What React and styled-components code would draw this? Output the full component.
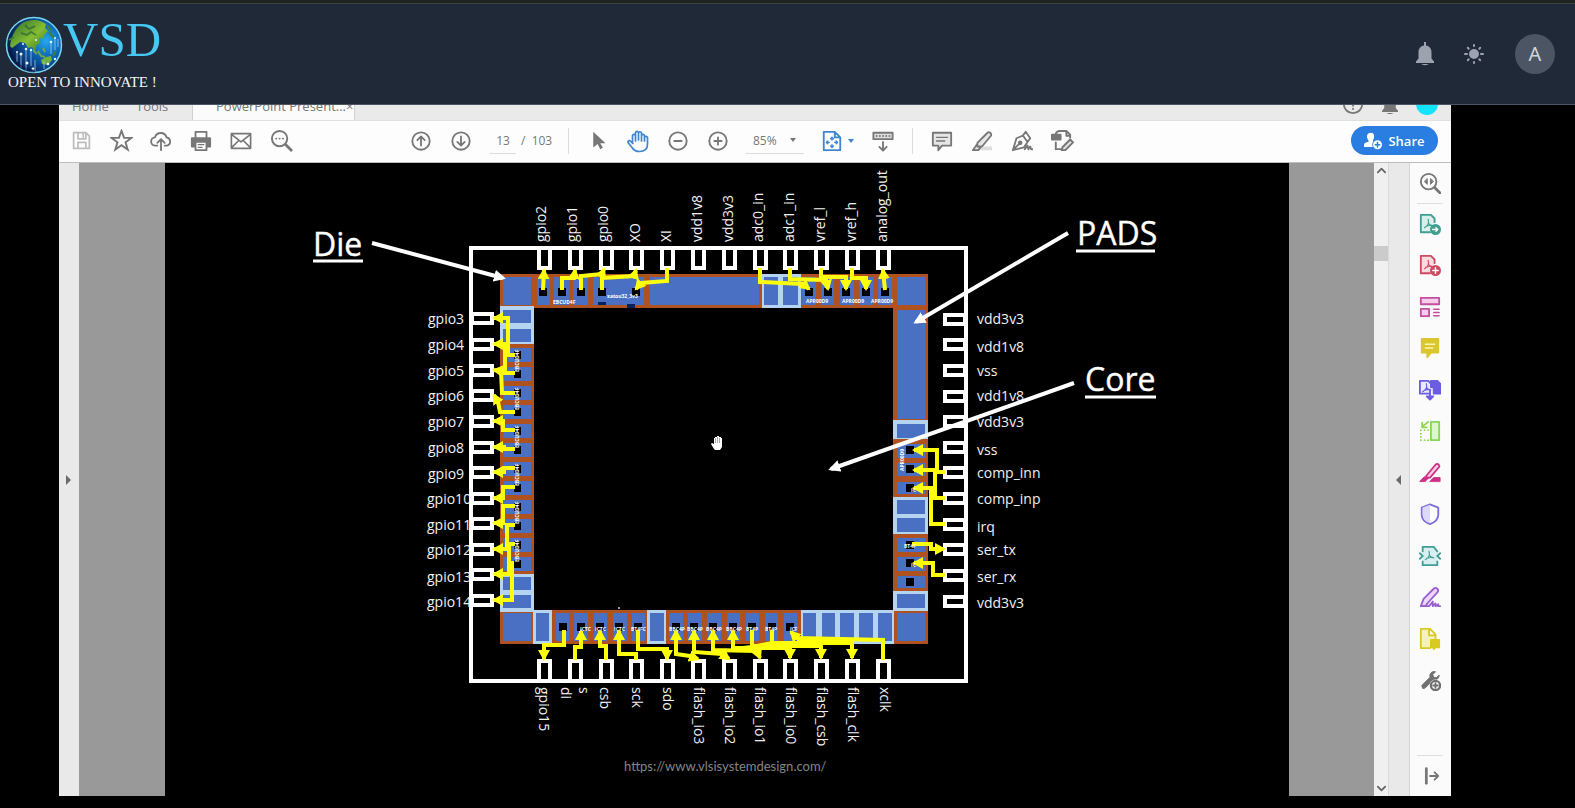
import React from "react";
import styled, { createGlobalStyle } from "styled-components";

const GlobalStyle = createGlobalStyle`
  * { box-sizing: border-box; }
  body { margin: 0; background: #000; font-family: "Open Sans", "Noto Sans", sans-serif; }
  button, input, select { font: inherit; color: inherit; margin: 0; padding: 0; border: 0; background: none; }
  button { cursor: pointer; }
`;

/* ---------- site header ---------- */

const TopStrip = styled.div`
  height: 4px;
  background: #1f241f;
  border-bottom: 1px solid #3d4043;
`;

const Header = styled.header`
  display: flex;
  align-items: center;
  justify-content: space-between;
  height: 101px;
  padding: 0 20px 0 5px;
  background: #202938;
  border-bottom: 1px solid #4b5563;
`;

const Brand = styled.a`
  display: flex;
  flex-direction: column;
  color: #fff;
  text-decoration: none;
  font-family: "Liberation Serif", serif;
`;

const BrandRow = styled.span`
  display: flex;
  align-items: flex-start;
  height: 56px;
`;

const BrandName = styled.span`
  font-size: 49px;
  line-height: 48px;
  color: #45c8f3;
`;

const BrandTag = styled.span`
  padding-left: 3px;
  font-size: 15px;
  line-height: 20px;
  color: #f4f5f7;
`;

const HeaderActions = styled.div`
  display: flex;
  align-items: center;
  gap: 25px;
  color: #9ca3af;
`;

const HeaderButton = styled.button`
  display: grid;
  place-items: center;
  width: 24px;
  height: 40px;
`;

const Avatar = styled.button`
  width: 40px;
  height: 40px;
  margin-left: 4px;
  border-radius: 50%;
  background: #4b5563;
  color: #d1d5db;
  font-family: "Noto Sans", sans-serif;
  font-size: 20px;
  line-height: 40px;
`;

/* ---------- document viewer ---------- */

const Viewer = styled.main`
  margin: 0 124px 12px 59px;
  background: #fdfdfd;
  color: #777;
`;

const TabStrip = styled.div`
  display: flex;
  align-items: flex-end;
  height: 16px;
  overflow: hidden;
  background: #eaeaea;
  font-size: 13px;
  line-height: 20px;
  border-bottom: 1px solid #e0e0e0;
`;

const Tab = styled.button`
  display: flex;
  justify-content: space-between;
  flex: none;
  height: 24px;
  width: ${(p) => p.$width}px;
  padding: 0 8px 4px ${(p) => p.$indent}px;
  color: #777;
  background: ${(p) => (p.$active ? "#fbfbfb" : "transparent")};
  border-right: 1px solid ${(p) => (p.$edge ? "#d0d0d0" : "transparent")};
  line-height: 20px;
  white-space: nowrap;
`;

const TabActions = styled.div`
  display: flex;
  align-items: center;
  gap: 18px;
  height: 32px;
  margin-left: auto;
  padding-right: 13px;
`;

const Profile = styled.span`
  width: 22px;
  height: 22px;
  border-radius: 50%;
  background: #12e4ff;
`;

const Toolbar = styled.div`
  display: flex;
  align-items: center;
  height: 42px;
  padding: 0 13px 2px 2px;
  border-bottom: 1px solid #bdbdbd;
  font-size: 12px;
`;

const ToolGroup = styled.div`
  display: flex;
  align-items: center;
  margin-left: ${(p) => p.$start || 0}px;
`;

const ToolButton = styled.button`
  display: flex;
  align-items: center;
  justify-content: center;
  gap: 5px;
  width: ${(p) => (p.$wide ? 48 : 40)}px;
  height: 40px;
  color: ${(p) => p.$color || "#777"};
`;

const Divider = styled.span`
  width: 1px;
  height: 26px;
  margin: 0 9px;
  background: #dcdcdc;
`;

const PageInput = styled.input`
  width: 26px;
  height: 26px;
  margin-left: 9px;
  border-bottom: 1px solid #dcdcdc;
  text-align: center;
`;

const PageTotal = styled.span`
  width: 43px;
  padding-left: 5px;
  white-space: pre;
`;

const ZoomField = styled.label`
  display: flex;
  align-items: center;
  width: 58px;
  height: 26px;
  margin: 0 9px 0 8px;
  padding: 0 8px 0 7px;
  border-bottom: 1px solid #dcdcdc;
`;

const ZoomSelect = styled.select`
  flex: 1;
  min-width: 0;
  appearance: none;
  outline: none;
`;

const Caret = styled.span`
  flex: none;
  border: 3px solid transparent;
  border-top: 4px solid currentColor;
  border-bottom: 0;
`;

const ShareButton = styled.button`
  display: flex;
  align-items: center;
  justify-content: center;
  gap: 6px;
  width: 87px;
  height: 29px;
  margin-left: auto;
  border-radius: 15px;
  background: #2a7de1;
  color: #fff;
  font-size: 13px;
  font-weight: 600;
`;

const Workspace = styled.div`
  display: flex;
`;

const PanelToggle = styled.button`
  display: grid;
  place-items: center;
  flex: none;
  width: 20px;
  padding-right: 2px;
  background: #e9e9e9;
  color: #6a6a6a;
`;

const Arrow = styled.span`
  border: 5px solid transparent;
  ${(p) => (p.$to === "left" ? "border-right-color" : "border-left-color")}: currentColor;
  border-${(p) => p.$to}-width: 0;
`;

const Stage = styled.section`
  flex: 1;
  min-width: 0;
  padding: 0 85px 0 86px;
  background: #999;
`;

const Slide = styled.svg`
  display: block;
  width: 100%;
  height: auto;
  background: #000;
  font-family: "Open Sans", "Noto Sans", sans-serif;
`;

const ScrollTrack = styled.div`
  display: flex;
  flex-direction: column;
  justify-content: space-between;
  flex: none;
  width: 15px;
  background: #f0f0f0;
  border-right: 1px solid #d9d9d9;
  color: #666;
`;

const ScrollButton = styled.button`
  display: grid;
  place-items: center;
  width: 14px;
  height: 15px;
`;

const ScrollThumb = styled.span`
  width: 14px;
  height: 15px;
  margin: 68px 0 auto;
  background: #cbcbcb;
`;

const SideTools = styled.aside`
  display: flex;
  flex-direction: column;
  align-items: center;
  flex: none;
  width: 42px;
  padding-right: 2px;
  border-left: 1px solid #d4d4d4;
  background: #fbfbfb;
`;

const SideList = styled.div`
  display: flex;
  flex-direction: column;
  justify-content: space-between;
  flex: 1;
  margin-bottom: 55px;
`;

const SideRule = styled.span`
  width: 26px;
  height: 1px;
  background: #dedede;
`;

/* ---------- icons ---------- */

const Icon = ({ size = 22, children, w = 2 }) => (
  <svg width={size} height={size} viewBox="0 0 24 24" fill="none" stroke="currentColor" strokeWidth={w} strokeLinejoin="round" strokeLinecap="round" aria-hidden="true">
    {children}
  </svg>
);

const Acro = ({ x = 0, y = 0 }) => (
  <path transform={`translate(${x} ${y})`} d="M10 7c1 4 .5 6-4 9M10 11c1 2 2 2.600 5 3M7.500 14.500c2-1 4-1 7-.8" strokeWidth="1.300" />
);

const Globe = () => (
  <svg width="58" height="58" viewBox="0 0 58 58" aria-hidden="true">
    <defs>
      <radialGradient id="sea" cx=".72" cy=".42" r=".7">
        <stop offset="0" stopColor="#25a9ee" />
        <stop offset=".45" stopColor="#0d62b5" />
        <stop offset="1" stopColor="#071c4b" />
      </radialGradient>
      <linearGradient id="land" x1="0" y1="0" x2="1" y2="1">
        <stop offset="0" stopColor="#26682c" />
        <stop offset=".55" stopColor="#86bd32" />
        <stop offset="1" stopColor="#28712f" />
      </linearGradient>
    </defs>
    <circle cx="29" cy="29" r="27.500" fill="url(#sea)" stroke="#78d5ef" strokeWidth="1.500" />
    <path d="M16 8c4-3 8-4 13-4 5 0 9 2 12 4l-1 4 3 3-3 3-2 5-4-1 1 5-4 3-1 6-3-5-4 1-3-5-5-1-4 3-4 3-2-2c1-9 5-17 11-22z" fill="url(#land)" />
    <path d="M20 9l4 4 6-3M16 17l6 2 4-3 5 3" stroke="#1d5b38" strokeWidth="2" opacity=".6" fill="none" />
    <path d="M28 34l4 4M33 35l3 5 4 1M38 32l2 4" stroke="#71a940" strokeWidth="2" fill="none" />
    <path d="M36 44l5-3 5-1 1 4-4 5-6-1z" fill="#70b23e" />
    <path d="M42 9l4 6M44 16l5 6M4 24l5-3M48 40l3-5" stroke="#3c832f" strokeWidth="2" />
    <path d="M16 52V38M21 55V33M26 50V34M30 55V44M12 46V36M46 38V26M50 34V22M53 31v-8M39 53v-8" stroke="#9fc8f2" strokeWidth="1" opacity=".8" />
    <g fill="#e4f4ff">
      <circle cx="16" cy="38" r="1.500" /><circle cx="21" cy="33" r="1.300" /><circle cx="26" cy="34" r="1.200" /><circle cx="46" cy="26" r="1.300" />
      <circle cx="22" cy="47" r="1.500" /><circle cx="28" cy="53" r="1.400" /><circle cx="50" cy="43" r="1.200" /><circle cx="43" cy="48" r="1.300" />
      <circle cx="31" cy="24" r="1" /><circle cx="18" cy="28" r="1" /><circle cx="50" cy="22" r="1" /><circle cx="12" cy="36" r="1" />
    </g>
    <path d="M5 35c3 12 13 20 25 20" stroke="#061440" strokeWidth="3" opacity=".5" fill="none" />
  </svg>
);

const BellShape = ({ w = 18, h = 24 }) => (
  <svg width={w} height={h} viewBox="0 0 18 24" fill="currentColor" aria-hidden="true">
    <path d="M8 0h2v3.600c3.500.6 5.500 3 5.500 7v5.900l2.500 3V21H0v-1.500l2.500-3v-5.900c0-4 2-6.400 5.500-7zM5.500 22h7c-.6 1.500-6.400 1.500-7 0z" />
  </svg>
);

const Sun = () => (
  <svg width="20" height="20" viewBox="0 0 20 20" stroke="currentColor" strokeWidth="2" strokeLinecap="round" aria-hidden="true">
    <circle cx="10" cy="10" r="4" fill="currentColor" />
    <path d="M10 1v1M10 18v1M1 10h2M17 10h2M3.800 3.800l.9.9M15.300 15.300l.9.9M3.800 16.200l.9-.9M15.300 4.700l.9-.9" />
  </svg>
);

const SaveIcon = () => <Icon size={21}><path d="M3 3h14l4 4v14H3zM8 3v7h9V3M8 21v-7h9v7M14 4v4" /></Icon>;
const StarIcon = () => <Icon size={23}><path strokeLinejoin="miter" d="M12 2l2.700 7.300h7.600l-6.100 4.600 2.300 7.600-6.500-4.600-6.500 4.600 2.300-7.600-6.100-4.600h7.600z" /></Icon>;
const CloudIcon = () => <Icon><path d="M8 17H6a4.500 4.500 0 0 1-.5-9A6.500 6.500 0 0 1 18 8a4.600 4.600 0 0 1 .5 9H16M12 22V11M8 14l4-4 4 4" /></Icon>;
const PrintIcon = () => (
  <Icon><path d="M6 8V2h12v6" /><path d="M2 9h20v9H2z" fill="currentColor" /><path d="M6 13h12v9H6z" fill="#fdfdfd" /><path d="M9 16h6M9 19h4" strokeWidth="1.500" /></Icon>
);
const MailIcon = () => <Icon><path d="M1.500 4h21v16h-21zM2 5l10 8 10-8M2 19l7-7M22 19l-7-7" strokeWidth="1.800" /></Icon>;
const FindIcon = () => <Icon size={23}><circle cx="10" cy="10" r="8" /><path d="M16 16l7 7" strokeWidth="3" strokeLinecap="butt" /><path d="M6.500 10h.1M10 10h.1M13.500 10h.1" /></Icon>;
const CircleIcon = ({ d }) => <Icon><circle cx="12" cy="12" r="9.500" /><path d={d} /></Icon>;
const PointerIcon = () => <Icon size={21}><path d="M6 2v18l5-4 3 6 3-2-3-5h6z" fill="currentColor" stroke="none" /></Icon>;
const HandIcon = () => <Icon size={24}><path strokeWidth="1.700" d="M6.500 14V6.500a1.600 1.600 0 0 1 3 0V12M9.500 11V3.500a1.600 1.600 0 0 1 3 0V11M12.500 11V3.800a1.600 1.600 0 0 1 3 0V12M15.500 6.500a1.600 1.600 0 0 1 3 0V12M18.500 8.500a1.600 1.600 0 0 1 3 0V15c0 5-3 7.500-8 7.500-4 0-6-1.500-7.500-4L2 13.500c-.4-1.500 1.500-2.500 2.700-1.200L7 14.500" /></Icon>;
const FitIcon = () => <Icon><path d="M3 2h12l6 6v14H3zM15 2v6h6" /><path strokeWidth="1.600" d="M12 8v3M10.500 9.500L12 8l1.500 1.500M12 19v-3M10.500 17.500L12 19l1.500-1.500M6 13.500h3M7.500 12L6 13.500 7.500 15M18 13.500h-3M16.500 12l1.500 1.500-1.500 1.500" /></Icon>;
const ScrollModeIcon = () => <Icon><path d="M1.500 3h21v7h-21z" fill="#ddd" /><path d="M5 6.500h.1M8.500 6.500h.1M12 6.500h.1M15.500 6.500h.1M19 6.500h.1M12 13v9M8 18.500l4 4 4-4" /></Icon>;
const CommentIcon = () => <Icon><path d="M2 3h20v14H12l-4 5v-5H2z" fill="#e6e6e6" /><path d="M6 8h12M6 12h9" strokeWidth="1.500" /></Icon>;
const MarkerIcon = () => <Icon><path d="M9 18h14v4H5z" fill="#ddd" stroke="none" /><path d="M7 14L18 3q1.500-1.500 3 0t1 3L12 18H7zM7 15l-5 7h6l3-4" fill="#e6e6e6" /></Icon>;
const PenIcon = () => <Icon><path d="M2 22L6 9l7-3 5 7-4 6zM2 22l8-8M13 6l3-4 5 7-3 4M15 21l3-4 1 4 2-3 1 3h2" /><circle cx="10" cy="14" r="1.500" fill="currentColor" /></Icon>;
const EditPageIcon = () => <Icon size={23}><path d="M5 5q1-3 4-3h7l4 4v3M16 2v5h4M5 14v7h5" /><path d="M1 6h9v5H1z" fill="currentColor" /><path d="M12 19l8-8 3 3-8 8h-4z" fill="#e0e0e0" /></Icon>;
const PersonIcon = () => <Icon size={18}><path d="M9 1c6 0 5 7 3 10v2h2l-2 7H-1c0-5 3-6 7-7v-2C3 8 3 1 9 1z" fill="currentColor" stroke="none" /><circle cx="18" cy="17" r="7" fill="#2a7de1" stroke="none" /><circle cx="18" cy="17" r="6" fill="currentColor" stroke="none" /><path d="M18 14v6M15 17h6" stroke="#2a7de1" /></Icon>;

const SIDE_ICONS = [
  ["Export PDF", "#3f9f91", <><path d="M17 10V6l-4-4H2v19h10" fill="#d8efec" /><Acro /><circle cx="18" cy="18" r="5" fill="currentColor" /><path d="M15 18h5M18.500 16l2 2-2 2" stroke="#fff" strokeWidth="1.600" /></>],
  ["Create PDF", "#cf4a62", <><path d="M17 10V6l-4-4H2v19h10" fill="#fadde1" /><Acro /><circle cx="18" cy="18" r="5" fill="currentColor" /><path d="M15 18h6M18 15v6" stroke="#fff" strokeWidth="1.600" /></>],
  ["Organize pages", "#c2509f", <><path d="M2 2h20v7H2zM2 14h9v8H2z" fill="#f7cdec" /><path d="M16 14.500h6M16 18h6M16 21.500h6" strokeWidth="1.500" /></>],
  ["Comment", "#dbc62e", <><path d="M3 2h18v15h-8l-4 5v-5H3z" fill="currentColor" /><path d="M7 8h10M7 12h8" stroke="#fff6b0" strokeWidth="1.600" /></>],
  ["Combine files", "#6a5de0", <><path d="M11 16H1V2h9l3 3" fill="#eceafd" /><Acro x={-2} y={-2} /><path d="M13 2h7l3 3v11h-7V9h-3z" fill="currentColor" /><path d="M12 12v9M8.500 19l3.500 3.500 3.500-3.500z" fill="currentColor" /></>],
  ["Crop pages", "#86d852", <><path d="M13 2h9v20h-9z" fill="#dcf7cd" /><path d="M10 2L4 7M3.500 3v5h5" /><path d="M2 11v.1M2 15v.1M2 18.500v.1M2 22h.1M6 22h.1M10 22h.1M6 11h.1M10 11h.1" /></>],
  ["Redact", "#d02f88", <><path d="M8 15L18 3q2-2 3.500 0t0 3L12 17H8z" fill="#f7cfe5" /><path d="M1 21l5-5 5 1-4 4zM12 21l4-4h7v4z" fill="currentColor" strokeWidth="1" /></>],
  ["Protect", "#7c6edc", <><path d="M12 1.500L21 5v8c0 5-4 8-9 10-5-2-9-5-9-10V5z" fill="#fff" /><path d="M12 2v20c-5-2-8-5-8-9V5z" fill="#dcd8fa" stroke="none" /></>],
  ["Compress PDF", "#3f9f98", <><path d="M4 2h12l4 5v15H4z" fill="#d9eeee" stroke="none" /><path d="M4 7V2h12l4 5M4 18v4h16v-4" /><path d="M1 9l3 3-3 3M23 9l-3 3 3 3" /><Acro x={1} /></>],
  ["Fill and sign", "#9a60d0", <><path d="M2 22l3-8L16 3q2-2 4 0t0 4L10 18l-3 4z" fill="#ead7fb" /><path d="M2 22h9l4-5v5l3-3v3l3-2v2h2" /></>],
  ["Send for comments", "#d8ca20", <><path d="M12 22H2V1h10l6 6v5M11 2v6h7" fill="#f5f0bd" /><path d="M13 13h9v8h-4l-2 2v-2h-3z" fill="currentColor" /></>],
  ["More tools", "#707070", <><path d="M4 21L3 18 12 9c-1-4 2-7 6-6l-3 3 1 3 3 .5 3-3c0 4-3 6-6 5l-9 9z" fill="currentColor" strokeWidth="1" /><circle cx="18" cy="18" r="6.500" fill="#fbfbfb" stroke="none" /><circle cx="18" cy="18" r="5" strokeWidth="2.500" /><path d="M15.500 18h5M18 15.500v5" /></>],
];

/* ---------- slide drawing: chip floor plan ---------- */

const BLUE = "#4a70c4";
const ORANGE = "#b0521f";
const PALE = "#b5d4ef";
const YELLOW = "#ffff0a";

const COLS = [544, 575, 606, 636, 667, 698, 729, 760, 790, 821, 852, 883];
const LEFT_ROWS = [318, 344, 370, 395, 421, 447, 472, 498, 523, 549, 574, 600];
const RIGHT_ROWS = [319, 344, 370, 396, 421, 447, 472, 498, 524, 549, 575, 601];

const TOP_NAMES = [
  ["gpio2", 546], ["gpio1", 577], ["gpio0", 608], ["XO", 640], ["XI", 671], ["vdd1v8", 702],
  ["vdd3v3", 733], ["adc0_in", 763], ["adc1_in", 794], ["vref_l", 825], ["vref_h", 856], ["analog_out", 887],
];
const BOTTOM_NAMES = [
  ["gpio15", 539], ["di", 561], ["s", 579], ["csb", 600], ["sck", 632], ["sdo", 663], ["flash_io3", 694],
  ["flash_io2", 725], ["flash_io1", 755], ["flash_io0", 786], ["flash_csb", 817], ["flash_clk", 848], ["xclk", 880],
];
const LEFT_BASE = [324, 350, 376, 401, 427, 453, 479, 504, 530, 555, 582, 607];
const RIGHT_NAMES = [
  ["vdd3v3", 324], ["vdd1v8", 352], ["vss", 376], ["vdd1v8", 401], ["vdd3v3", 427], ["vss", 455],
  ["comp_inn", 478], ["comp_inp", 504], ["irq", 532], ["ser_tx", 555], ["ser_rx", 582], ["vdd3v3", 608],
];

/* x or y start and end of the blue cells in each band of the ring */
const TOP_CELLS = [[503, 531], [537, 550], [554, 569], [573, 588], [593, 644], [650, 759], [764, 778], [783, 798], [802, 816], [821, 834], [840, 854], [859, 873], [878, 892], [897, 925]];
const BOTTOM_CELLS = [[503, 531], [536, 549], [556, 569], [574, 588], [594, 607], [613, 627], [632, 645], [650, 664], [669, 683], [688, 702], [707, 721], [727, 740], [746, 759], [765, 778], [784, 797], [803, 816], [822, 835], [840, 854], [859, 873], [878, 892], [897, 925]];
const LEFT_CELLS = [[310, 323], [329, 342], [348, 362], [367, 381], [386, 400], [405, 419], [424, 438], [443, 457], [462, 476], [481, 495], [500, 514], [519, 533], [538, 552], [557, 571], [577, 590], [595, 608]];
const RIGHT_CELLS = [[310, 419], [424, 438], [444, 458], [463, 476], [482, 494], [500, 514], [518, 532], [538, 552], [557, 571], [576, 588], [594, 608]];
const PALE_FRAMES = [[762, 274, 39, 34], [500, 306, 34, 38], [500, 574, 34, 38], [533, 610, 19, 34], [647, 610, 19, 34], [801, 610, 93, 34], [893, 420, 35, 19], [893, 497, 35, 37], [893, 591, 35, 20]];

const TOP_PORTS = [543, 562, 581, 602, 636, 809, 828, 846, 866, 885];
const BOTTOM_PORTS = [563, 581, 600, 619, 638, 676, 694, 713, 733, 752, 772, 790];
const RIGHT_PORTS = [450, 469, 488, 545, 563, 582];

const WIRES = [
  "543,290 544,270", "562,290 562,278 574,278 575,270", "581,290 581,276 602,274 604,269", "602,290 602,278 634,276 636,270",
  "667,268 667,281 641,283 636,289", "760,268 760,282 803,284 809,289", "790,268 790,279 826,280 828,289",
  "821,268 821,277 846,277 846,289", "852,268 852,278 866,278 866,289", "885,290 883,270",
  "515,355 508,355 508,318 494,318", "515,373 505,373 505,344 494,344", "515,393 502,393 501,371 494,370",
  "515,412 500,412 498,402 494,395", "515,430 503,430 503,421 494,421", "515,449 504,449 504,447 494,447",
  "515,468 504,468 504,472 494,472", "515,487 503,487 503,498 494,498", "515,506 503,506 503,523 494,523",
  "515,525 507,525 507,549 494,549", "515,544 509,544 509,574 494,574", "512,561 512,600 494,600",
  "564,630 564,645 544,645 544,659", "575,660 575,647 581,647 581,631", "606,660 606,646 600,646 600,631",
  "636,660 636,654 619,654 619,631", "638,630 638,649 667,649 667,659",
  "752,630 752,646 821,646 821,658", "772,630 772,643 852,643 852,658", "883,660 883,640 797,638 791,632",
  "945,472 937,472 937,450 914,450", "945,498 935,498 935,470 914,470", "945,524 931,524 931,488 914,488",
  "912,544 931,544 931,549 944,549", "945,575 933,575 933,563 914,563",
];
const DOUBLE_WIRES = [
  "676,631 676,654 690,656 698,659", "694,631 694,652 722,654 729,659", "713,631 713,650 757,651 760,658", "733,631 733,648 790,648 790,658",
];
const CALLOUTS = [
  { text: "Die", x: 313, y: 256, from: [372, 243], to: [503, 278], line: [313, 363, 261] },
  { text: "PADS", x: 1077, y: 245, from: [1068, 233], to: [916, 322], line: [1076, 1155, 251] },
  { text: "Core", x: 1085, y: 391, from: [1074, 383], to: [831, 469], line: [1085, 1156, 397] },
];
const MICRO = [
  ["EBCUD4F", 553, 304], ["xatou32_3v3", 607, 298], ["APR00D9", 806, 303], ["APR00D9", 842, 303], ["APR00D9", 871, 303],
  ["ICTC", 580, 631], ["ICTC", 595, 631], ["ICTC", 614, 631], ["BT4FC", 631, 631], ["BBC4P", 669, 631], ["BBC4P", 687, 631],
  ["BBC4P", 706, 631], ["BBC4P", 726, 631], ["BT4P", 746, 631], ["BT4P", 765, 631], ["ICF", 790, 631], ["BT4F", 904, 548],
  ["IC", 911, 492], ["IC", 911, 567],
];

const ChipSlide = () => (
  <Slide viewBox="165 163 1124 633" role="img" aria-label="Chip floor plan with die, pads and core">
    <defs>
      <marker id="wireHead" markerUnits="userSpaceOnUse" markerWidth="12" markerHeight="12" refX="9" refY="6" orient="auto-start-reverse">
        <path d="M0 0L11 6L0 12z" fill={YELLOW} />
      </marker>
      <marker id="callHead" markerUnits="userSpaceOnUse" markerWidth="12" markerHeight="12" refX="9" refY="6" orient="auto">
        <path d="M0 0L12 6L0 12z" fill="#fff" />
      </marker>
    </defs>

    <g fill="#f0f0f0" fontWeight="500" fontSize="14">
      {TOP_NAMES.map(([n, x]) => <text key={n} transform={`translate(${x} 242) rotate(-90)`}>{n}</text>)}
      {BOTTOM_NAMES.map(([n, x]) => <text key={n} transform={`translate(${x} 687) rotate(90)`}>{n}</text>)}
      {LEFT_BASE.map((y, i) => <text key={y} x={i < 7 ? 428 : 427} y={y}>{`gpio${i + 3}`}</text>)}
      {RIGHT_NAMES.map(([n, y]) => <text key={y} x="977" y={y}>{n}</text>)}
    </g>

    <g fill="#000" stroke="#fff">
      <rect x="471" y="248" width="495" height="433" strokeWidth="4" fill="none" />
      <g strokeWidth="4">
        {COLS.map((c) => <React.Fragment key={c}><rect x={c - 5} y="248" width="11" height="20" /><rect x={c - 5} y="661" width="11" height="20" /></React.Fragment>)}
        {LEFT_ROWS.map((r) => <rect key={r} x="472" y={r - 4} width="20" height="9" />)}
        {RIGHT_ROWS.map((r) => <rect key={r} x="945" y={r - 4} width="20" height="9" />)}
      </g>
    </g>

    <path fill={ORANGE} fillRule="evenodd" d="M500 274H928V644H500zM534 308V610H893V308z" />
    <g fill={PALE}>{PALE_FRAMES.map(([x, y, w, h]) => <rect key={`${x}-${y}`} x={x} y={y} width={w} height={h} />)}</g>
    <g fill={BLUE}>
      {TOP_CELLS.map(([a, b]) => <rect key={a} x={a} y="277" width={b - a} height="28" />)}
      {BOTTOM_CELLS.map(([a, b]) => <rect key={a} x={a} y="613" width={b - a} height="28" />)}
      {LEFT_CELLS.map(([a, b]) => <rect key={a} x="503" y={a} width="28" height={b - a} />)}
      {RIGHT_CELLS.map(([a, b]) => <rect key={a} x="897" y={a} width="28" height={b - a} />)}
    </g>
    <g fill="#000">
      {TOP_PORTS.map((x) => <rect key={x} x={x - 4} y="288" width="8" height="8" />)}
      {BOTTOM_PORTS.map((x) => <rect key={x} x={x - 4} y="623" width="8" height="8" />)}
      {LEFT_CELLS.slice(2, 14).map(([a]) => <rect key={a} x="514" y={a + 3} width="7" height="8" />)}
      {RIGHT_PORTS.map((y) => <rect key={y} x="906" y={y - 4} width="8" height="8" />)}
    </g>
    <path d="M598 302h8v3h-8zM627 304h8v4h-8z" fill="#08205c" />

    <g fill="none" stroke={YELLOW} strokeWidth="4">
      {WIRES.map((p) => <polyline key={p} points={p} markerEnd="url(#wireHead)" />)}
      {DOUBLE_WIRES.map((p) => <polyline key={p} points={p} markerStart="url(#wireHead)" markerEnd="url(#wireHead)" />)}
    </g>
    <path d="M772 641H797V638H852V645H821V648H790L755 650H733V647L752 645Z" fill={YELLOW} />

    <g fill="#fff" fontSize="5" fontWeight="700">
      {MICRO.map(([t, x, y]) => <text key={`${x}-${y}`} x={x} y={y}>{t}</text>)}
      {[372, 410, 448, 486, 524, 562].map((y) => <text key={y} transform={`translate(519 ${y}) rotate(-90)`}>EBCUD4F</text>)}
      <text transform="translate(904 471) rotate(-90)">APR00D9</text>
    </g>

    {CALLOUTS.map(({ text, x, y, from, to, line }) => (
      <g key={text} stroke="#fff">
        <line x1={from[0]} y1={from[1]} x2={to[0]} y2={to[1]} strokeWidth="4" markerEnd="url(#callHead)" />
        <line x1={line[0]} y1={line[2]} x2={line[1]} y2={line[2]} strokeWidth="3" />
        <text x={x} y={y} fill="#fff" strokeWidth=".4" fontSize="32">{text}</text>
      </g>
    ))}

    <path d="M714 449l-3-5 1-1 2 1v-6h1v-1h2v-1h2v1h2v1h1v9l-2 3h-5z" fill="#fff" />
    <path d="M715.500 438v5M717.500 437v6M719.500 438v5" stroke="#555" strokeWidth=".5" />
    <circle cx="619" cy="608" r="1" fill="#d9c7bd" />
    <text x="624" y="771" fontFamily="Lato, sans-serif" fontSize="13" fill="#858585">https://www.vlsisystemdesign.com/</text>
  </Slide>
);

/* ---------- page ---------- */

const Tool = ({ label, color, wide, children }) => (
  <ToolButton type="button" aria-label={label} $color={color} $wide={wide}>{children}</ToolButton>
);

export default function App() {
  return (
    <>
      <GlobalStyle />
      <TopStrip />
      <Header>
        <Brand href="#home">
          <BrandRow><Globe /><BrandName>VSD</BrandName></BrandRow>
          <BrandTag>OPEN TO INNOVATE !</BrandTag>
        </Brand>
        <HeaderActions>
          <HeaderButton type="button" aria-label="Notifications"><BellShape /></HeaderButton>
          <HeaderButton type="button" aria-label="Switch theme"><Sun /></HeaderButton>
          <Avatar type="button" aria-label="Account">A</Avatar>
        </HeaderActions>
      </Header>

      <Viewer>
        <TabStrip>
          <Tab type="button" $width={64} $indent={13}>Home</Tab>
          <Tab type="button" $width={70} $indent={13} $edge>Tools</Tab>
          <Tab type="button" $width={162} $indent={23} $active $edge><span>PowerPoint Present...</span><span>×</span></Tab>
          <TabActions>
            <Icon><circle cx="12" cy="12" r="10" /><path d="M9 9c0-4 6-4 6 0 0 2-3 2-3 5M12 17v.5" /></Icon>
            <BellShape w={16} h={22} />
            <Profile />
          </TabActions>
        </TabStrip>

        <Toolbar>
          <ToolGroup>
            <Tool label="Save" color="#bdbdbd"><SaveIcon /></Tool>
            <Tool label="Star"><StarIcon /></Tool>
            <Tool label="Upload"><CloudIcon /></Tool>
            <Tool label="Print"><PrintIcon /></Tool>
            <Tool label="Mail"><MailIcon /></Tool>
            <Tool label="Find"><FindIcon /></Tool>
          </ToolGroup>
          <ToolGroup $start={100}>
            <Tool label="Previous page"><CircleIcon d="M12 17V7M8 11l4-4 4 4" /></Tool>
            <Tool label="Next page"><CircleIcon d="M12 7v10M8 13l4 4 4-4" /></Tool>
            <PageInput aria-label="Page number" defaultValue="13" />
            <PageTotal>{"/  103"}</PageTotal>
            <Divider />
            <Tool label="Select"><PointerIcon /></Tool>
            <Tool label="Pan" color="#3f86cf"><HandIcon /></Tool>
            <Tool label="Zoom out"><CircleIcon d="M8 12h8" /></Tool>
            <Tool label="Zoom in"><CircleIcon d="M8 12h8M12 8v8" /></Tool>
            <ZoomField>
              <ZoomSelect aria-label="Zoom level" defaultValue="85%"><option>85%</option></ZoomSelect>
              <Caret />
            </ZoomField>
            <Tool label="Fit page" color="#3f86cf" wide><FitIcon /><Caret /></Tool>
          </ToolGroup>
          <ToolGroup $start={2}>
            <Tool label="Scrolling mode"><ScrollModeIcon /></Tool>
            <Divider />
            <Tool label="Comment"><CommentIcon /></Tool>
            <Tool label="Highlight"><MarkerIcon /></Tool>
            <Tool label="Sign"><PenIcon /></Tool>
            <Tool label="Edit page"><EditPageIcon /></Tool>
          </ToolGroup>
          <ShareButton type="button"><PersonIcon />Share</ShareButton>
        </Toolbar>

        <Workspace>
          <PanelToggle type="button" aria-label="Open left panel"><Arrow $to="right" /></PanelToggle>
          <Stage><ChipSlide /></Stage>
          <ScrollTrack>
            <ScrollButton type="button" aria-label="Scroll up"><Icon size={11} w={4}><path d="M4 16l8-8 8 8" /></Icon></ScrollButton>
            <ScrollThumb />
            <ScrollButton type="button" aria-label="Scroll down"><Icon size={11} w={4}><path d="M4 8l8 8 8-8" /></Icon></ScrollButton>
          </ScrollTrack>
          <PanelToggle type="button" aria-label="Close right panel"><Arrow $to="left" /></PanelToggle>
          <SideTools>
            <Tool label="Search tools"><Icon><circle cx="10.500" cy="10.500" r="8.500" /><path d="M17 17l6 6" strokeWidth="3" /><path d="M9 7.500v6l-3-3zM12.500 7.500v6l3-3z" fill="currentColor" strokeWidth="1" /></Icon></Tool>
            <SideRule />
            <SideList>
              {SIDE_ICONS.map(([label, color, art]) => (
                <Tool key={label} label={label} color={color}><Icon>{art}</Icon></Tool>
              ))}
            </SideList>
            <SideRule />
            <Tool label="Collapse tools"><Icon><path d="M8 4v16" strokeWidth="3" /><path d="M12 12h9M17 8l4 4-4 4" /></Icon></Tool>
          </SideTools>
        </Workspace>
      </Viewer>
    </>
  );
}
